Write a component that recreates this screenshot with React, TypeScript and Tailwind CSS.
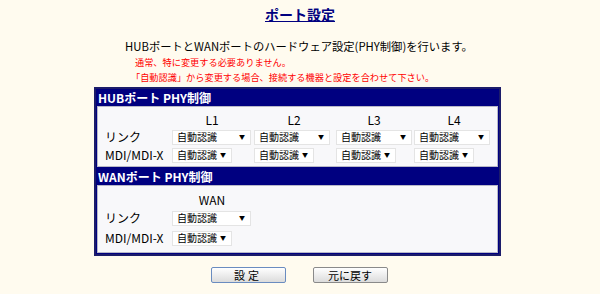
import React from 'react';

const font = { fontFamily: '"Noto Sans CJK JP", "Liberation Sans", sans-serif' };

const Select = ({ w }: { w: string }) => (
  <div className={`${w} h-[15px] bg-white border border-[#e4e4e4] flex items-center justify-between pl-[4px] pr-[5px] text-[10px] leading-none text-black whitespace-nowrap`}>
    <span>自動認識</span>
    <span className="text-[6px]">▼</span>
  </div>
);

const cols = 'grid grid-cols-[67px_82px_82px_78px_1fr] items-center';

const App = () => {
  return (
    <div className="w-[600px] h-[294px] bg-[#fffbef] text-black overflow-hidden" style={font}>
      <div className="pt-[1px] h-[24px] text-center">
        <span className="text-[14px] font-bold underline text-[#000080] leading-[22px]">ポート設定</span>
      </div>

      <div className="mt-[14px] h-[16px] text-center text-[11.3px] leading-[16px] pr-[2px]">
        HUBポートとWANポートのハードウェア設定(PHY制御)を行います。
      </div>

      <div className="pl-[131px] text-[9.2px] text-[#ff0000]">
        <div className="pl-[4px] h-[15px] leading-[16px]">通常、特に変更する必要ありません。</div>
        <div className="h-[15px] leading-[16px]">「自動認識」から変更する場合、接続する機器と設定を合わせて下さい。</div>
      </div>

      <div className="ml-[94px] mt-[3px] w-[407px] bg-[#000080] border-[2px] border-[#1c1c6a] p-[1px]">
        <div className="text-white font-bold text-[12px] leading-[16px] h-[16px] pl-[1px]">HUBポート PHY制御</div>
        <div className="bg-[#f8f8fa] border border-[#b8b8c8] pl-[7px] pt-[4px] pb-[5px] text-[12px]">
          <div className={`${cols} h-[15px]`}>
            <span></span>
            <span className="w-[80px] text-center">L1</span>
            <span className="w-[80px] text-center">L2</span>
            <span className="w-[76px] text-center">L3</span>
            <span className="w-[80px] text-center">L4</span>
          </div>
          <div className={`${cols} h-[15px] mt-[2px]`}>
            <span>リンク</span>
            <Select w="w-[79px]" />
            <Select w="w-[76px]" />
            <Select w="w-[76px]" />
            <Select w="w-[76px]" />
          </div>
          <div className={`${cols} h-[15px] mt-[3px]`}>
            <span>MDI/MDI-X</span>
            <Select w="w-[60px]" />
            <Select w="w-[60px]" />
            <Select w="w-[60px]" />
            <Select w="w-[60px]" />
          </div>
        </div>

        <div className="text-white font-bold text-[12px] leading-[17px] h-[17px] pl-[1px] mt-[1px]">WANポート PHY制御</div>
        <div className="bg-[#f8f8fa] border border-[#b8b8c8] pl-[7px] pt-[5px] pb-[8px] text-[12px]">
          <div className={`${cols} h-[15px]`}>
            <span></span>
            <span className="w-[80px] text-center">WAN</span>
          </div>
          <div className={`${cols} h-[15px] mt-[3px]`}>
            <span>リンク</span>
            <Select w="w-[79px]" />
          </div>
          <div className={`${cols} h-[15px] mt-[5px]`}>
            <span>MDI/MDI-X</span>
            <Select w="w-[60px]" />
          </div>
        </div>
      </div>

      <div className="mt-[11px] flex justify-center gap-[27px] pr-[2px]">
        <button className="w-[75px] h-[16px] rounded-[2px] border border-[#6a8cc0] bg-gradient-to-b from-[#ffffff] to-[#dcdcdc] text-[11px] leading-none tracking-[3px]">
          設定
        </button>
        <button className="w-[75px] h-[16px] rounded-[2px] border border-[#8a8a8a] bg-gradient-to-b from-[#ffffff] to-[#dcdcdc] text-[11px] leading-none">
          元に戻す
        </button>
      </div>
    </div>
  );
};

export default App;
